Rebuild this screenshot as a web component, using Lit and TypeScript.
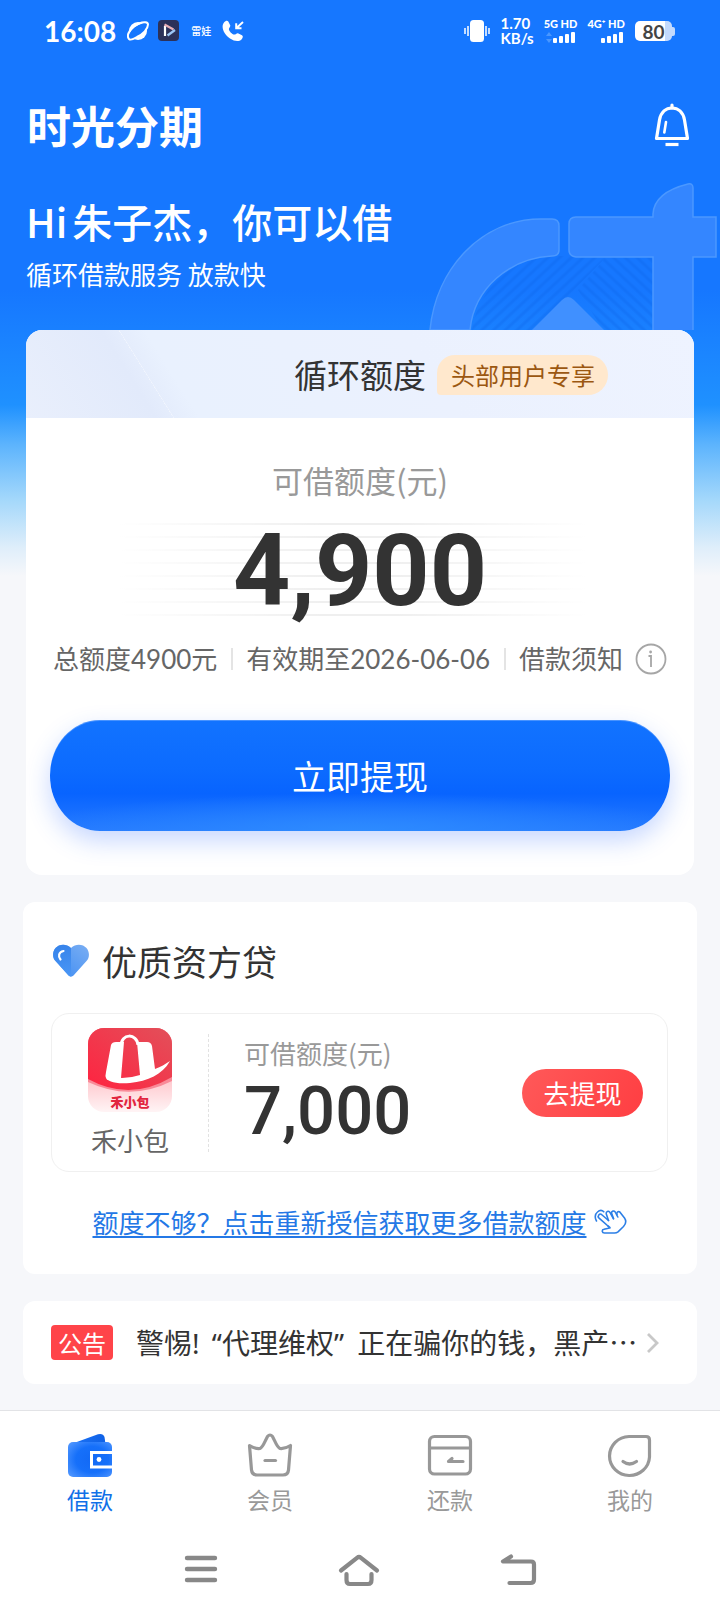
import { LitElement, html, css, svg, TemplateResult } from "lit";
import { customElement, property, state } from "lit/decorators.js";
import { classMap } from "lit/directives/class-map.js";

const icons: Record<string, TemplateResult> = {
  planet: html`<svg width="22" height="20" viewBox="0 0 22 20" aria-hidden="true">
    <ellipse cx="11" cy="10" rx="9" ry="9" fill="#fff"/>
    <ellipse cx="11" cy="10" rx="10.500" ry="5" transform="rotate(-38 11 10)" fill="#1677ff"/>
    <path d="M2 18 C-1.5 14 4 6 12 2.5 C17 .5 21 1 21 3.5 C21 8 16 13 10 16 C6 18.5 3 19 2 18" fill="none" stroke="#fff" stroke-width="2"/>
  </svg>`,
  player: html`<svg width="22" height="22" viewBox="0 0 22 22" aria-hidden="true">
    <rect width="21" height="21" rx="4" fill="#2c3159"/>
    <path d="M7 6v10" stroke="#fff" stroke-width="2.2"/>
    <path d="M6.500 4.500L15.500 9.500" stroke="#e9b0b8" stroke-width="2.2"/>
    <path d="M17 10L9.500 15.500" stroke="#9cc6f5" stroke-width="2.2"/>
  </svg>`,
  call: html`<svg width="23" height="22" viewBox="0 0 23 22" aria-hidden="true">
    <path d="M2 2.500C3.500 .5 5.500 .3 6.300 1.500L8.300 5.500C8.600 6.800 6.800 8 6.900 9.200C7.300 11.500 10 14.200 12.300 14.600C13.500 14.700 14.600 13 15.900 13.200L20 15.200C21.300 16.200 21 18 19.500 19.500C17 21.800 12.500 21.500 8 18.500C2 14 -1.500 7 2 2.500Z" fill="#fff"/>
    <path d="M21 2L14.500 8M14.200 3.200V8.300H19.500" fill="none" stroke="#fff" stroke-width="2"/>
  </svg>`,
  vibrate: html`<svg width="26" height="22" viewBox="0 0 26 22" aria-hidden="true">
    <rect x="6" y="0" width="14" height="22" rx="3.500" fill="#fff"/>
    <path d="M4 6v10M1 8v6M22 6v10M25 8v6" stroke="#fff" stroke-width="1.500"/>
  </svg>`,
  bell: html`<svg width="36" height="44" viewBox="0 0 36 44" aria-hidden="true" fill="none" stroke="#fff" stroke-width="3.200" stroke-linecap="round" stroke-linejoin="round">
    <path d="M2.500 35.500L5.500 17C7 9 12 5 18 5C24 5 29 9 30.500 17L33.500 35.500Z"/>
    <path d="M18 5V2" /><path d="M12 19L10.300 29.500" stroke-width="2.600"/>
    <path d="M11.500 41.500H24.500" stroke-linecap="butt"/>
  </svg>`,
  info: html`<svg width="32" height="32" viewBox="0 0 32 32" aria-hidden="true" fill="none" stroke="#a6a6a6" stroke-width="1.800">
    <circle cx="16" cy="16" r="14.500"/><path d="M13.500 13H16V24"/><circle cx="15.600" cy="9" r="1.400" fill="#a6a6a6" stroke="none"/>
  </svg>`,
  heart: html`<svg width="38" height="34" viewBox="0 0 38 34" aria-hidden="true">
    <defs>
      <linearGradient id="hl" x1="0" y1="0" x2="0" y2="1"><stop offset="0" stop-color="#2c7ce8"/><stop offset="1" stop-color="#4a97f6"/></linearGradient>
      <linearGradient id="hr" x1="1" y1="0" x2="0" y2="1"><stop offset="0" stop-color="#7aaef3"/><stop offset="1" stop-color="#3d8cf3"/></linearGradient>
    </defs>
    <path d="M19 4C14 -.8 7 .2 3.500 4C.2 8 .3 13.500 3.500 17L16.500 31.500C18 33 20 33 21.500 31.500L34.500 17C37.700 13.500 37.800 8 34.500 4C31 .2 24 -.8 19 4Z" fill="url(#hr)"/>
    <path d="M19 4C14 -.8 7 .2 3.500 4C.2 8 .3 13.500 3.500 17L16.500 31.500Q17.600 32.600 19 32.600Z" fill="url(#hl)" opacity=".8"/>
    <path d="M11.500 7C6.500 8 6 12.500 8.500 15.500" fill="none" stroke="#fff" stroke-width="2.200" stroke-linecap="round"/>
  </svg>`,
  hand: html`<svg width="33" height="26" viewBox="0 0 33 26" aria-hidden="true" fill="none" stroke="#2c7fe6" stroke-width="1.600" stroke-linecap="round" stroke-linejoin="round">
    <path d="M2.500 12C.5 9 1 5 3.500 3C5.500 1.200 8 1 9.800 2.800"/>
    <path d="M14 17L4.800 8.800C3.200 7 5.500 4 7.500 5.500L14.500 11.500"/>
    <path d="M14.500 11.500L12.200 4.800C11.800 2.200 14.500 1.500 15.800 3.200L19.500 9.800"/>
    <path d="M19.500 9.500L17.500 4C17.500 1.800 20 1.500 21.200 3L23.800 8"/>
    <path d="M23 5.500C22.300 3 24.500 1.800 26 3.200L30.500 9C32.500 12 31.800 15 29.500 17.500L24 22.800C22.800 23.800 21.800 24 20.500 24H10.500C7.800 24 7.500 20.800 10 20.300L15.500 19C16.500 18.800 16 18.200 14 17"/>
  </svg>`,
  chevron: html`<svg width="14" height="22" viewBox="0 0 14 22" aria-hidden="true" fill="none" stroke="#c8c8c8" stroke-width="2.800"><path d="M2 2L11 11L2 20"/></svg>`,
  menu: html`<svg width="36" height="34" viewBox="0 0 36 34" aria-hidden="true" stroke="#888" stroke-width="4.400" stroke-linecap="round"><path d="M4 5H32M4 16H32M4 27H32"/></svg>`,
  home: html`<svg width="44" height="34" viewBox="0 0 44 34" aria-hidden="true" fill="none" stroke="#888" stroke-width="4.200" stroke-linecap="round" stroke-linejoin="round">
    <path d="M4 17.500L20 4.800C21.500 3.600 22.500 3.600 24 4.800L40 17.500"/><path d="M9.500 21V27Q9.500 31 13 31H31Q34.500 31 34.500 27V21"/>
  </svg>`,
  back: html`<svg width="38" height="34" viewBox="0 0 38 34" aria-hidden="true" fill="none" stroke="#888" stroke-width="4.200" stroke-linecap="round" stroke-linejoin="round">
    <path d="M12 3.500L4 8.500H32Q35 8.500 35 11.500V26.500Q35 30 31.500 30H10.500"/>
  </svg>`,
  wallet: html`<svg width="46" height="46" viewBox="0 0 46 46" aria-hidden="true">
    <defs>
      <radialGradient id="w1" cx=".55" cy=".5" r=".75"><stop offset="0" stop-color="#1269f5"/><stop offset=".5" stop-color="#1670fa"/><stop offset="1" stop-color="#5a9dff"/></radialGradient>
      <linearGradient id="w2" x1="0" y1="0" x2="1" y2="0"><stop offset="0" stop-color="#1c72f5"/><stop offset="1" stop-color="#0f61e6"/></linearGradient>
    </defs>
    <path d="M7 11L31 2.300Q36 1 37.500 5L38.500 12H7Z" fill="url(#w2)"/>
    <rect x="1" y="10" width="44" height="35" rx="5" fill="url(#w1)"/>
    <path d="M46 20.500H24.500V35H46" fill="none" stroke="#fff" stroke-width="3"/>
    <circle cx="32" cy="27.500" r="2.400" fill="#fff"/>
  </svg>`,
  crown: html`<svg width="46" height="46" viewBox="0 0 46 46" aria-hidden="true" fill="none" stroke="#989898" stroke-width="3.200" stroke-linecap="round" stroke-linejoin="round">
    <path d="M2.500 13.500Q8 17 13 16.500C16 15.500 18 9 20.500 4.500Q23 1.500 25.500 4.500C28 9 30 15.500 33 16.500Q38 17 43.500 13.500L41.500 38Q41 43 36 43H10Q5 43 4.500 38Z"/><path d="M18 28.500H28.500"/>
  </svg>`,
  card: html`<svg width="46" height="46" viewBox="0 0 46 46" aria-hidden="true" fill="none" stroke="#989898" stroke-width="3.200" stroke-linecap="round" stroke-linejoin="round">
    <rect x="2.500" y="4.500" width="41" height="37.500" rx="5"/><path d="M3 16H43"/><path d="M36 29.500H21.500L25 26.500"/>
  </svg>`,
  face: html`<svg width="46" height="46" viewBox="0 0 46 46" aria-hidden="true" fill="none" stroke="#989898" stroke-width="3.200" stroke-linecap="round" stroke-linejoin="round">
    <path d="M22 4.500H39Q42.500 4.500 42.500 8V25A20 19.500 0 1 1 22 4.500Z"/><path d="M16 29.500Q22.500 34.500 29.500 29.500"/>
  </svg>`,
};

@customElement("status-bar")
class StatusBar extends LitElement {
  static styles = css`
    :host { display: flex; align-items: center; justify-content: space-between; height: 62px; padding: 0 45px 0 44px; color: #fff; font-family: Lato, "Noto Sans CJK SC", sans-serif; }
    svg { display: block; }
    .side { display: flex; align-items: center; gap: 10px; }
    .side.left { gap: 9px; }
    .time { font-size: 28px; line-height: 32px; font-weight: 700; margin-right: 2px; }
    .tag { font-size: 10px; line-height: 14px; font-weight: 500; padding: 0 2px; }
    .speed { font-size: 15px; line-height: 15px; font-weight: 700; }
    .speed span { display: block; }
    .signal { display: grid; justify-items: end; gap: 2px; font-size: 11px; line-height: 12px; font-weight: 900; }
    .battery { display: flex; align-items: center; }
    .level { width: 37px; height: 20px; border-radius: 5px; background: linear-gradient(90deg, #fff 80%, #c3dafd 80%); color: #444; font-size: 19px; line-height: 21px; font-weight: 700; text-align: center; }
    .cap { width: 3px; height: 9px; border-radius: 0 2px 2px 0; background: #c3dafd; }
  `;
  private bars(weak: boolean) {
    return html`<svg width="32" height="12" viewBox="0 0 32 12" aria-hidden="true">
      ${weak ? svg`<path d="M4 0L7 4H1ZM4 11L7 7H1Z" fill="#4a97ff"/>` : ""}
      ${[5, 7, 9, 11].map((h, i) => svg`<rect x=${8 + i * 6} y=${11 - h} width="4" height=${h} rx="1" fill="#fff"/>`)}
    </svg>`;
  }
  render() {
    return html`
      <div class="side left"><span class="time">16:08</span>${icons.planet}${icons.player}<span class="tag">雷娃</span>${icons.call}</div>
      <div class="side">${icons.vibrate}
        <div class="speed"><span>1.70</span><span>KB/s</span></div>
        <div class="signal"><span>5G HD</span>${this.bars(true)}</div>
        <div class="signal"><span>4G⁺ HD</span>${this.bars(false)}</div>
        <div class="battery"><div class="level">80</div><div class="cap"></div></div>
      </div>`;
  }
}

@customElement("credit-card")
class CreditCard extends LitElement {
  static styles = css`
    :host { display: block; background: #fff; border-radius: 16px; overflow: hidden; padding-bottom: 44px; }
    svg { display: block; }
    .head { display: grid; grid-template-columns: 1fr auto 1fr; align-items: center; height: 88px;
      background: linear-gradient(58deg, transparent 50%, #fff8 50%, transparent 51%) 85px 0 / 70px 88px no-repeat, linear-gradient(58deg, #e9effc, #e2eafb 18%, #e9f1fe 24%, #ebf1fe 60%, #eef3ff); }
    .title { grid-column: 2; margin: 0; font-size: 33px; line-height: 44px; font-weight: 400; color: #333; }
    .badge { justify-self: start; margin: 2px 0 0 11px; padding: 0 13px 0 14px; font-size: 24px; line-height: 40px; color: #9b5711; background: #ffe8cd; border-radius: 18px 20px 20px 4px; }
    .label { margin: 39px 0 15px; text-align: center; font-size: 31px; line-height: 46px; color: #999; }
    .amount { text-align: center; font-family: Roboto, sans-serif; font-weight: 700; font-size: 100px; line-height: 106px; color: #333;
      background: linear-gradient(90deg, #fff 14%, #fff0 45%, #fff0 55%, #fff 84%), repeating-linear-gradient(180deg, #fff 0 5px, #efefef 5px 7px, #fff 7px 13px); }
    .meta { display: flex; justify-content: space-between; align-items: center; margin: 17px 27px 43px; font-family: Lato, "Noto Sans CJK SC", sans-serif; font-size: 26px; line-height: 36px; color: #666; white-space: nowrap; }
    .rule { width: 2px; height: 22px; background: #e4e4e4; }
    .notice { display: flex; align-items: center; gap: 12px; color: inherit; text-decoration: none; }
    .withdraw { display: block; width: calc(100% - 48px); height: 111px; margin: 0 24px; border: 0; border-radius: 50px / 55px; font: inherit; font-size: 34px; color: #fff;
      background: radial-gradient(ellipse 56% 34% at 50% 100%, #2d8bff, #2d8bff00), linear-gradient(180deg, #1273ff, #0c6bff 45%, #0864ff 66%, #2679ff);
      box-shadow: inset 0 1px 0 #4893ff, 0 10px 24px #2d6aff44; }
  `;
  render() {
    return html`
      <div class="head"><h2 class="title">循环额度</h2><span class="badge">头部用户专享</span></div>
      <p class="label">可借额度(元)</p>
      <div class="amount">4,900</div>
      <div class="meta">
        <span>总额度4900元</span><span class="rule"></span>
        <span>有效期至2026-06-06</span><span class="rule"></span>
        <a class="notice" href="#notice">借款须知 ${icons.info}</a>
      </div>
      <button class="withdraw">立即提现</button>`;
  }
}

@customElement("partner-loan")
class PartnerLoan extends LitElement {
  static styles = css`
    :host { display: block; background: #fff; border-radius: 12px; padding: 35px 29px 32px 28px; }
    svg { display: block; }
    .head { display: flex; align-items: center; gap: 12px; margin-bottom: 28px; padding-left: 1px; }
    .title { margin: 0; font-size: 35px; line-height: 48px; font-weight: 400; color: #333; }
    .offer { display: flex; align-items: center; height: 157px; border: 1px solid #f0f0f0; border-radius: 18px; padding-right: 24px; }
    .brand { display: grid; justify-items: center; gap: 10px; width: 156px; font-size: 26px; line-height: 36px; color: #666; }
    .logo { position: relative; width: 84px; height: 84px; }
    .logo-name { position: absolute; left: 0; right: 0; bottom: 2px; text-align: center; font-size: 13px; line-height: 16px; font-weight: 900; color: #e2263f; }
    .rule { align-self: center; height: 118px; border-left: 1px dashed #e2e2e2; }
    .quota { flex: 1; padding-left: 35px; }
    .label { margin: 0; font-size: 26px; line-height: 36px; color: #999; }
    .amount { font-family: Roboto, sans-serif; font-weight: 500; font-size: 67px; line-height: 80px; color: #333; }
    .go { border: 0; width: 121px; height: 48px; border-radius: 24px; font: inherit; font-size: 26px; color: #fff; background: linear-gradient(120deg, #ff5959, #ff3e42); }
    .more { display: flex; align-items: center; justify-content: center; gap: 7px; margin-top: 30px; font-size: 26px; line-height: 40px; color: #2478e6; text-decoration: none; white-space: nowrap; }
    .more span { text-decoration: underline; text-decoration-thickness: 2px; text-underline-offset: 3px; }
  `;
  render() {
    return html`
      <div class="head">${icons.heart}<h2 class="title">优质资方贷</h2></div>
      <div class="offer">
        <div class="brand">
          <div class="logo">
            <svg width="84" height="84" viewBox="0 0 84 84" aria-hidden="true">
              <defs>
                <linearGradient id="lr" x1="0" y1="1" x2="1" y2="0"><stop offset="0" stop-color="#ff2340"/><stop offset="1" stop-color="#e2505a"/></linearGradient>
                <linearGradient id="lp" x1="0" y1="0" x2="0" y2="1"><stop offset=".6" stop-color="#ffc6cc"/><stop offset="1" stop-color="#fff4f5"/></linearGradient>
                <clipPath id="lc"><rect width="84" height="84" rx="16"/></clipPath>
              </defs>
              <g clip-path="url(#lc)">
                <rect width="84" height="84" fill="url(#lp)"/>
                <path d="M0 0H84V53Q42 74 0 54Z" fill="#f98a98"/>
                <path d="M0 0H84V49Q42 74 0 51Z" fill="url(#lr)"/>
                <path d="M33 18C33 5 49 5 50 17" fill="none" stroke="#fff" stroke-width="3"/>
                <path d="M23 17Q24 14 28 14H36L33 50C27 51 20 55 18 50Q17 48 18 44Z" fill="#fff"/>
                <path d="M49 14H59Q63 14 64 18L67 41C73 39 77 36 82 33C74 47 60 53 42 55C27 56 19 54 18 48L34 50Q43 50 52 47Z" fill="#fff"/>
              </g>
            </svg>
            <span class="logo-name">禾小包</span>
          </div>
          <span>禾小包</span>
        </div>
        <div class="rule"></div>
        <div class="quota"><p class="label">可借额度(元)</p><div class="amount">7,000</div></div>
        <button class="go">去提现</button>
      </div>
      <a class="more" href="#reapply"><span>额度不够？点击重新授信获取更多借款额度</span>${icons.hand}</a>`;
  }
}

@customElement("notice-bar")
class NoticeBar extends LitElement {
  static styles = css`
    :host { display: block; background: #fff; border-radius: 12px; }
    .row { display: flex; align-items: center; height: 83px; padding: 0 37px 0 28px; text-decoration: none; }
    .tag { flex: none; margin-right: 23px; padding: 0 7px; border-radius: 4px; background: #ff4449; color: #fff; font-size: 24px; line-height: 35px; }
    .text { flex: 1; font-family: "Noto Sans", "Noto Sans CJK SC", sans-serif; font-size: 28px; line-height: 40px; color: #333; white-space: nowrap; overflow: hidden; }
    .quote { margin: 0 6px 0 5px; }
    .dots { font-family: "Noto Sans CJK SC", sans-serif; }
    svg { flex: none; display: block; }
  `;
  render() {
    return html`<a class="row" href="#announcement"><span class="tag">公告</span><span class="text">警惕!<span class="quote"> “代理维权” </span>正在骗你的钱，黑产<span class="dots" lang="zh-CN">…</span></span>${icons.chevron}</a>`;
  }
}

@customElement("bottom-bar")
class BottomBar extends LitElement {
  static styles = css`
    :host { display: block; background: #fff; border-top: 1px solid #e2e3e6; }
    svg { display: block; }
    .tabs { display: grid; grid-template-columns: repeat(4, 1fr); height: 125px; }
    .tab { display: grid; justify-items: center; align-content: start; padding: 21px 0 0; border: 0; background: none; font: inherit; font-size: 23px; line-height: 42px; color: #999; }
    .tab.active { color: #1170e8; }
    .system { display: flex; justify-content: center; gap: 118px; padding: 17px 0 25px; }
    .key { display: block; padding: 0; border: 0; background: none; }
  `;
  @state() private current = 0;
  private tabs = [["借款", "wallet"], ["会员", "crown"], ["还款", "card"], ["我的", "face"]];
  render() {
    return html`
      <nav class="tabs">${this.tabs.map(([label, icon], i) => html`
        <button class=${classMap({ tab: true, active: i === this.current })} @click=${() => (this.current = i)}>${icons[icon]}<span>${label}</span></button>`)}
      </nav>
      <div class="system">
        <button class="key" aria-label="menu">${icons.menu}</button>
        <button class="key" aria-label="home">${icons.home}</button>
        <button class="key" aria-label="back">${icons.back}</button>
      </div>`;
  }
}

@customElement("app-root")
class AppRoot extends LitElement {
  @property() name = "朱子杰";
  static styles = css`
    :host { display: flex; flex-direction: column; min-height: 100vh; font-family: "Noto Sans CJK SC", sans-serif;
      background: linear-gradient(180deg, #1677ff 0, #1677ff 290px, #1f91ff 405px, #5db4fd 445px, #a4d8fb 500px, #dfeefa 548px, #f6f7fa 576px) #f6f7fa; }
    svg { display: block; }
    .hero { position: relative; padding: 0 26px; color: #fff; height: 268px; }
    .art { position: absolute; right: 0; bottom: 0; }
    .top { display: flex; align-items: center; justify-content: space-between; height: 66px; padding: 30px 4px 35px 1px; }
    .brand { margin: 0; font-size: 44px; line-height: 60px; font-weight: 700; }
    .bell { padding: 0; border: 0; background: none; }
    .hi { display: flex; gap: 5px; margin: 0; font-size: 40px; line-height: 56px; font-weight: 500; }
    .sub { margin: 7px 0 0; font-size: 26px; line-height: 36px; }
    .main { flex: 1; display: flex; flex-direction: column; gap: 27px; padding: 0 23px 26px; }
    .credit { position: relative; margin: 0 3px; }
  `;
  render() {
    return html`
      <status-bar></status-bar>
      <header class="hero">
        <svg class="art" width="296" height="150" viewBox="424 180 296 150" aria-hidden="true">
          <defs>
            <pattern id="st" width="8" height="8" patternUnits="userSpaceOnUse" patternTransform="rotate(-43)"><path d="M0 2H8" stroke="#0d66ea" stroke-width="3" opacity=".35"/></pattern>
            <pattern id="su" width="8" height="8" patternUnits="userSpaceOnUse" patternTransform="rotate(43)"><path d="M0 2H8" stroke="#0d66ea" stroke-width="3" opacity=".35"/></pattern>
          </defs>
          <path d="M472 330C478 290 510 258 555 256H607L535 330Z" fill="url(#st)"/>
          <path d="M607 256H653V330H603L578 290Z" fill="url(#su)"/>
          <path d="M532 330L562 300Q568 294 574 300L604 330Z" fill="#4090ff"/>
          <g fill="#3486ff" stroke="#4b98ff" stroke-width="1.500">
            <path d="M430 330C436 268 482 219 541 219H552Q559 219 559 226V250Q559 256 552 256C510 258 474 288 470 330Z"/>
            <path d="M576 217H653V214C654 196 672 188 688 184Q693 183 693 188V217H716V257H693V332H653V257H576Q569 256 569 250V224Q569 217 576 217Z"/>
          </g>
        </svg>
        <div class="top"><h1 class="brand">时光分期</h1><button class="bell" aria-label="消息">${icons.bell}</button></div>
        <p class="hi"><span>Hi</span><span>${this.name}，你可以借</span></p>
        <p class="sub">循环借款服务 放款快</p>
      </header>
      <main class="main">
        <credit-card class="credit"></credit-card>
        <partner-loan></partner-loan>
        <notice-bar></notice-bar>
      </main>
      <bottom-bar></bottom-bar>`;
  }
}
